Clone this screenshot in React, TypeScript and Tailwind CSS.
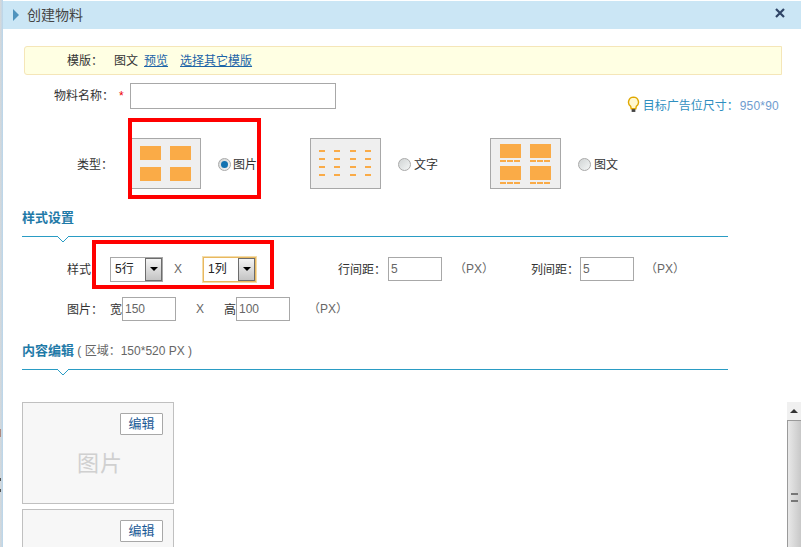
const Radio = ({ checked = false }: { checked?: boolean }) => (
  <span className="relative inline-block w-[13px] h-[13px] rounded-full border border-[#a9a9a9] bg-gradient-to-br from-[#d0d4d4] to-[#f4f6f6] shrink-0">
    {checked && <span className="absolute left-[2px] top-[2px] w-[7px] h-[7px] rounded-full bg-[#1272b0]" />}
  </span>
);

const TypeBox = ({ children }: { children: React.ReactNode }) => (
  <div className="w-[71px] h-[51px] border border-[#a8a8a8] bg-[#efefef] shrink-0">{children}</div>
);

const Select = ({ value, focus = false }: { value: string; focus?: boolean }) => (
  <div className={`w-[53px] h-[25px] flex items-stretch bg-white border ${focus ? 'border-[#e8b860] shadow-[0_0_0_1px_#f4dca8]' : 'border-[#a8a8a8]'}`}>
    <span className="flex-1 pl-[4px] leading-[23px] text-[#222]">{value}</span>
    <span className="w-[17px] flex items-center justify-center bg-gradient-to-b from-[#f4f4f4] to-[#c4c4c4] border border-[#6c6c6c]">
      <span className="w-0 h-0 border-x-[4px] border-x-transparent border-t-[4px] border-t-black" />
    </span>
  </div>
);

const NumInput = ({ value }: { value: string }) => (
  <div className="w-[54px] h-[24px] border border-[#a8a8a8] pl-[2px] leading-[22px] text-[#666]">{value}</div>
);

const SectionTitle = ({ title, note }: { title: string; note?: string }) => (
  <div className="ml-[22px] w-[706px]">
    <div className="h-[18px] leading-[18px] mb-[9px]">
      <span className="font-bold text-[13px] text-[#1f7aa8]">{title}</span>
      {note && <span className="text-[#666]"> {note}</span>}
    </div>
    <div className="relative h-[1px] bg-[#2a9cc4]">
      <svg className="absolute left-[35px] top-0" width="12" height="7" viewBox="0 0 12 7">
        <path d="M0 0 L6 6 L12 0" fill="#fff" stroke="#2a9cc4" strokeWidth="1" />
      </svg>
    </div>
  </div>
);

// only the first card is fully on screen, the second is cut off by the window
const Card = ({ label = false }: { label?: boolean }) => (
  <div className="relative w-[152px] h-[102px] shrink-0 border border-[#c0c0c0] bg-[#f7f7f7] flex items-center justify-center pt-[20px] pl-[4px]">
    {label && <span className="text-[22px] text-[#d0d0d0] tracking-[1px]">图片</span>}
    <button className="absolute right-[10px] top-[10px] w-[43px] h-[22px] bg-white border border-[#a8a8a8] rounded-[1px] text-[#1a5a96] leading-[20px] text-[13px]">编辑</button>
  </div>
);

export default function App() {
  return (
    <div className="relative w-[801px] h-[547px] overflow-hidden bg-white text-[12px] text-[#333]" style={{ fontFamily: '"Liberation Sans", "Noto Sans CJK SC", sans-serif' }}>
      <div className="absolute left-0 top-0 bottom-0 w-[3px] bg-gradient-to-r from-[#d8d8d8] to-[#b8d6ec]" />
      <div className="absolute left-0 top-[429px] w-[1px] h-[8px] bg-[#b08a80]" />
      <div className="absolute left-0 top-[478px] w-[1px] h-[14px] border-y-[3px] border-[#555]" />

      <div className="ml-[3px] mt-[1px] h-[28px] bg-[#cbe6f5] flex items-center justify-between pl-[10px] pr-[16px]">
        <div className="flex items-center gap-[8px]">
          <span className="w-0 h-0 border-y-[6px] border-y-transparent border-l-[6px] border-l-[#4f93bd]" />
          <span className="text-[#444] text-[14px]">创建物料</span>
        </div>
        <svg className="mb-[5px]" width="10" height="10" viewBox="0 0 10 10"><path d="M1 1 L9 9 M9 1 L1 9" stroke="#2f4466" strokeWidth="2.2" /></svg>
      </div>

      <div className="ml-[24px] mt-[17px] w-[758px] h-[29px] bg-[#ffffe3] border border-[#f5e6b8] rounded-l-[3px] flex items-center pl-[42px]">
        <span className="w-[47px]">模版：</span>
        <span>图文</span>
        <a className="ml-[6px] text-[#1c64a8] underline">预览</a>
        <a className="ml-[12px] text-[#1c64a8] underline">选择其它模版</a>
      </div>

      <div className="mt-[8px] h-[26px] flex items-center pl-[54px]">
        <span className="w-[65px]">物料名称：</span>
        <span className="text-[#e00] w-[11px]">*</span>
        <div className="w-[206px] h-[26px] border border-[#a8a8a8]" />
      </div>

      <div className="flex justify-end items-center gap-[3px] pr-[22px] mt-[-14px] h-[22px]">
        <svg className="mb-[4px]" width="13" height="17" viewBox="0 0 14 18">
          <path d="M7 1 a5.5 5.5 0 0 1 3 10 l-.5 2.5 h-5 L4 11 a5.5 5.5 0 0 1 3-10z" fill="#fff8d0" stroke="#e0a800" strokeWidth="1.5" />
          <rect x="5" y="14" width="4" height="3" fill="#444" />
        </svg>
        <span className="text-[#2f8fc0]">目标广告位尺寸：</span>
        <span className="text-[#6f9ccf] ml-[-2px] tracking-[0.2px]">950*90</span>
      </div>

      <div className="mt-[21px] h-[51px] flex items-center pl-[77px]">
        <span className="w-[53px] pt-[2px]">类型：</span>
        <TypeBox>
          <div className="grid grid-cols-2 gap-x-[9px] gap-y-[7px] w-[51px] mx-auto mt-[7px]">
            <div className="h-[14px] bg-[#faab47]" /><div className="h-[14px] bg-[#faab47]" />
            <div className="h-[14px] bg-[#faab47]" /><div className="h-[14px] bg-[#faab47]" />
          </div>
        </TypeBox>
        <span className="ml-[17px] flex pt-[1px]"><Radio checked /></span>
        <span className="ml-[2px] w-[24px] pt-[2px]">图片</span>

        <div className="ml-[53px]">
          <TypeBox>
            <div className="grid grid-cols-[6px_6px_6px_6px] gap-x-[9.33px] gap-y-[6px] ml-[8px] mt-[11px]">
              {Array.from({ length: 16 }).map((_, i) => <div key={i} className="h-[2px] bg-[#faab47]" />)}
            </div>
          </TypeBox>
        </div>
        <span className="ml-[17px] flex pt-[1px]"><Radio /></span>
        <span className="ml-[3px] w-[24px] pt-[2px]">文字</span>

        <div className="ml-[52px]">
          <TypeBox>
            <div className="grid grid-cols-2 gap-x-[9px] gap-y-[4px] w-[51px] mx-auto mt-[5px]">
              {[0, 1, 2, 3].map((i) => (
                <div key={i}>
                  <div className="h-[14px] bg-[#faab47]" />
                  <div className="flex gap-[1px] mt-[2px]">
                    <div className="h-[2px] w-[6px] bg-[#faab47]" /><div className="h-[2px] w-[6px] bg-[#faab47]" /><div className="h-[2px] w-[6px] bg-[#faab47]" />
                  </div>
                </div>
              ))}
            </div>
          </TypeBox>
        </div>
        <span className="ml-[17px] flex pt-[1px]"><Radio /></span>
        <span className="ml-[3px] pt-[2px]">图文</span>
      </div>

      <div className="mt-[20px]"><SectionTitle title="样式设置" /></div>

      <div className="mt-[19px] h-[26px] flex items-center pl-[67px]">
        <span className="w-[43px] pt-[2px]">样式</span>
        <Select value="5行" />
        <span className="w-[40px] pl-[11px] text-[#666]">X</span>
        <Select value="1列" focus />
        <span className="ml-[82px] w-[50px] pt-[2px]">行间距：</span>
        <NumInput value="5" />
        <span className="ml-[12px] w-[77px] text-[#666]">（PX）</span>
        <span className="w-[49px] pt-[2px]">列间距：</span>
        <NumInput value="5" />
        <span className="ml-[11px] text-[#666]">（PX）</span>
      </div>

      <div className="mt-[15px] h-[24px] flex items-center pl-[67px]">
        <span className="w-[43px] pt-[2px]">图片：</span>
        <span className="w-[12px] pt-[2px]">宽</span>
        <NumInput value="150" />
        <span className="w-[48px] pl-[20px] text-[#666]">X</span>
        <span className="w-[12px] pt-[2px]">高</span>
        <NumInput value="100" />
        <span className="ml-[18px] text-[#666]">（PX）</span>
      </div>

      <div className="mt-[21px]"><SectionTitle title="内容编辑" note="( 区域：150*520 PX )" /></div>

      <div className="flex justify-between mt-[32px]">
        <div className="ml-[22px] flex flex-col gap-[5px]">
          <Card label />
          <Card />
        </div>
        <div className="w-[14px] h-[145px] flex flex-col">
          <div className="h-[18px] bg-[#f0f0f0] flex items-center justify-center">
            <span className="w-0 h-0 border-x-[4px] border-x-transparent border-b-[4px] border-b-[#333]" />
          </div>
          <div className="flex-1 border-l border-t border-[#9a9a9a] bg-gradient-to-r from-[#e8e8e8] to-[#c8c8c8] flex justify-center pt-[72px]">
            <span className="w-[7px] h-[9px] border-y-[2px] border-[#777]" />
          </div>
        </div>
      </div>

      <div className="absolute left-[128px] top-[118px] w-[133px] h-[81px] border-[4px] border-[#ff0000]" />
      <div className="absolute left-[92px] top-[240px] w-[182px] h-[49px] border-[4px] border-[#ff0000]" />
    </div>
  );
}
